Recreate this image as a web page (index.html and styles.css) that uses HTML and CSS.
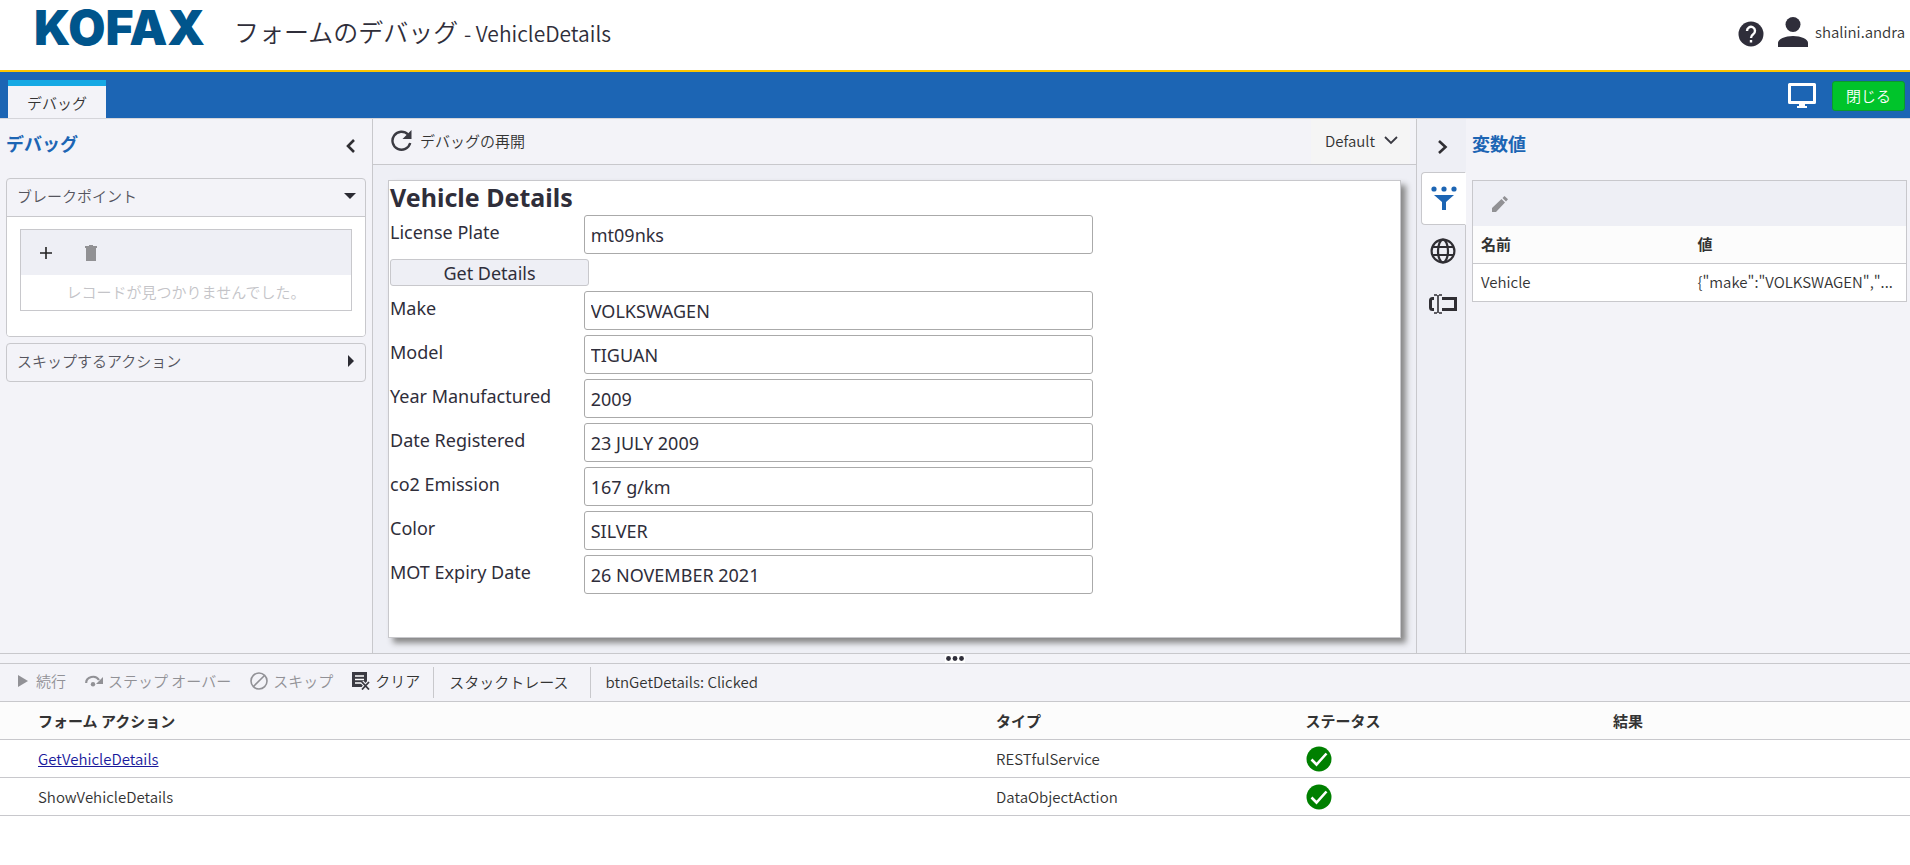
FILE: index.html
```html
<!DOCTYPE html>
<html lang="ja">
<head>
  <meta charset="UTF-8">
  <meta name="viewport" content="width=device-width, initial-scale=1.0">
  <title>フォームのデバッグ - VehicleDetails</title>
  <link rel="stylesheet" href="styles.css">
</head>
<body>
  <header class="header">
    <span class="logo">KOFAX</span>
    <h1 class="title">フォームのデバッグ <small>- VehicleDetails</small></h1>
    <div class="user">
      <button class="icon-btn" aria-label="ヘルプ">
        <svg width="26" height="26" viewBox="0 0 26 26"><circle cx="13" cy="13" r="12.5" fill="#2f2e3a"/><path d="M9 10a4 4 0 1 1 6.2 3.2Q13 14.7 13 17M13 19v2.4" fill="none" stroke="#fff" stroke-width="2.4"/></svg>
      </button>
      <svg width="30" height="30" viewBox="0 0 30 30" fill="#2f2e3a"><circle cx="15" cy="7.5" r="7.5"/><path d="M0 30v-4c0-4 7-7 15-7s15 3 15 7v4z"/></svg>
      <span>shalini.andra</span>
    </div>
  </header>

  <nav class="tabbar">
    <a class="tab" href="#">デバッグ</a>
    <div class="tabbar-right">
      <button class="icon-btn" aria-label="画面">
        <svg width="28" height="26" viewBox="0 0 28 26"><path d="M1.5 1.5h25v18h-25z" fill="none" stroke="#fff" stroke-width="3" stroke-linejoin="round"/><path d="M11 20h6v3h2v2H9v-2h2z" fill="#fff"/></svg>
      </button>
      <button class="close-btn">閉じる</button>
    </div>
  </nav>

  <main class="main">
    <!-- 左パネル -->
    <aside class="left">
      <div class="panel-head">
        <h2>デバッグ</h2>
        <button class="icon-btn" aria-label="折りたたむ">
          <svg width="9" height="14" viewBox="0 0 9 14"><path d="M8 1L2 7l6 6" fill="none" stroke="#2f2e33" stroke-width="2.6"/></svg>
        </button>
      </div>
      <section class="accordion">
        <button class="accordion-head">ブレークポイント
          <svg width="12" height="6" viewBox="0 0 12 6"><path d="M0 0h12L6 6z" fill="#2b2b33"/></svg>
        </button>
        <div class="accordion-body">
          <div class="grid-box">
            <div class="grid-tools">
              <button class="icon-btn" aria-label="追加">
                <svg width="12" height="12" viewBox="0 0 12 12"><path d="M6 0v12M0 6h12" stroke="#222" stroke-width="1.6"/></svg>
              </button>
              <button class="icon-btn" aria-label="削除">
                <svg width="12" height="16" viewBox="0 0 12 16"><path d="M0 1h4V0h4v1h4v2H0zM1 3h10v13H1z" fill="#919194"/></svg>
              </button>
            </div>
            <p class="empty">レコードが見つかりませんでした。</p>
          </div>
        </div>
      </section>
      <section class="accordion">
        <button class="accordion-head">スキップするアクション
          <svg width="12" height="12" viewBox="0 0 12 12"><path d="M4 0v12l6-6z" fill="#2b2b33"/></svg>
        </button>
      </section>
    </aside>

    <!-- フォーム表示エリア -->
    <section class="center">
      <div class="center-tools">
        <button class="text-btn">
          <svg width="21" height="21" viewBox="0 0 21 21"><path d="M17 4.5A9 9 0 1 0 19.2 13" fill="none" stroke="#3a3a42" stroke-width="2.4"/><path d="M20.5 0v9h-9z" fill="#3a3a42"/></svg>
          デバッグの再開
        </button>
        <div class="theme">
          <select aria-label="テーマ"><option>Default</option></select>
          <svg width="14" height="9" viewBox="0 0 14 9"><path d="M1 1l6 6 6-6" fill="none" stroke="#3a3a42" stroke-width="1.8"/></svg>
        </div>
      </div>
      <div class="stage">
        <form class="form">
          <h2>Vehicle Details</h2>
          <div class="field"><label for="plate">License Plate</label><input id="plate" type="text" value="mt09nks"></div>
          <button class="get-btn" type="button">Get Details</button>
          <div class="field"><label for="make">Make</label><input id="make" type="text" value="VOLKSWAGEN"></div>
          <div class="field"><label for="model">Model</label><input id="model" type="text" value="TIGUAN"></div>
          <div class="field"><label for="year">Year Manufactured</label><input id="year" type="text" value="2009"></div>
          <div class="field"><label for="registered">Date Registered</label><input id="registered" type="text" value="23 JULY 2009"></div>
          <div class="field"><label for="co2">co2 Emission</label><input id="co2" type="text" value="167 g/km"></div>
          <div class="field"><label for="color">Color</label><input id="color" type="text" value="SILVER"></div>
          <div class="field"><label for="mot">MOT Expiry Date</label><input id="mot" type="text" value="26 NOVEMBER 2021"></div>
        </form>
      </div>
    </section>

    <!-- 右パネル -->
    <nav class="strip">
      <button class="strip-btn strip-toggle" aria-label="展開">
        <svg width="10" height="14" viewBox="0 0 10 14"><path d="M1 1l6.5 6L1 13" fill="none" stroke="#2f2e33" stroke-width="2.6"/></svg>
      </button>
      <button class="strip-btn active" aria-label="変数値">
        <svg width="26" height="24" viewBox="0 0 26 24" fill="#1c65b4"><circle cx="3" cy="3" r="2.6"/><circle cx="13" cy="3" r="2.6"/><circle cx="23" cy="3" r="2.6"/><path d="M3 9h20l-8 7v8h-4v-8z"/></svg>
      </button>
      <button class="strip-btn" aria-label="グローバル">
        <svg width="26" height="26" viewBox="0 0 26 26" fill="none" stroke="#2f2e33" stroke-width="2.2"><circle cx="13" cy="13" r="11.4"/><ellipse cx="13" cy="13" rx="5" ry="11.4"/><path d="M2 9h22M2 17h22"/></svg>
      </button>
      <button class="strip-btn" aria-label="フィールド">
        <svg width="28" height="20" viewBox="0 0 28 20" fill="none" stroke="#2f2e33"><path d="M5 4.500H3.500Q1.500 4.500 1.500 6.500v7q0 2 2 2H5M13 4.500h13.500v11H13" stroke-width="3"/><path d="M9 1v18M5 1h3M10 1h3M5 19h3M10 19h3" stroke-width="1.6"/></svg>
      </button>
      <div class="strip-rest"></div>
    </nav>
    <aside class="right">
      <div class="panel-head"><h2>変数値</h2></div>
      <div class="var-box">
        <div class="grid-tools">
          <button class="icon-btn" aria-label="編集">
            <svg width="16" height="16" viewBox="0 0 16 16" fill="#919194"><path d="M0 16v-4l9.500-9 3.500 3.500L4 16zM10.500 2L12.500 0 16 3.300 14 5.500z"/></svg>
          </button>
        </div>
        <table class="var-table">
          <thead><tr><th>名前</th><th>値</th></tr></thead>
          <tbody><tr><td>Vehicle</td><td>{"make":"VOLKSWAGEN","...</td></tr></tbody>
        </table>
      </div>
    </aside>
  </main>

  <div class="splitter">
    <button class="splitter-grip" aria-label="サイズ変更">
      <svg width="18" height="5" viewBox="0 0 18 5" fill="#2f2e3a"><circle cx="2.5" cy="2.5" r="2.4"/><circle cx="9" cy="2.5" r="2.4"/><circle cx="15.5" cy="2.5" r="2.4"/></svg>
    </button>
  </div>

  <!-- 実行ログ -->
  <section class="bottom">
    <div class="actions">
      <div class="action-group">
        <button class="text-btn resume" disabled>
          <svg width="10" height="12" viewBox="0 0 10 12"><path d="M0 0l10 6-10 6z" fill="#919196"/></svg>続行
        </button>
        <button class="text-btn" disabled>
          <svg width="18" height="12" viewBox="0 0 18 12"><path d="M1.200 8A6.800 6 0 0 1 14 5" fill="none" stroke="#919196" stroke-width="2.200"/><path d="M18 2v7h-7z" fill="#919196"/><circle cx="8" cy="9.300" r="2.200" fill="#919196"/></svg>ステップ オーバー
        </button>
        <button class="text-btn" disabled>
          <svg width="18" height="18" viewBox="0 0 18 18" fill="none" stroke="#919196" stroke-width="1.600"><circle cx="9" cy="9" r="8"/><path d="M14.500 3.500l-11 11"/></svg>スキップ
        </button>
        <button class="text-btn">
          <svg width="18" height="18" viewBox="0 0 18 18"><path d="M0 0h15v10l-5 5H0z" fill="#3a3a42"/><path d="M3 4h9M3 7.500h9M3 11h6" stroke="#fff" stroke-width="1.500"/><path d="M10 10l7 7.500M17 10l-7 7.500" stroke="#f3f3f8" stroke-width="4"/><path d="M10 10l7 7.500M17 10l-7 7.500" stroke="#3a3a42" stroke-width="1.800"/></svg>クリア
        </button>
      </div>
      <button class="text-btn divided">スタックトレース</button>
      <span class="divided">btnGetDetails: Clicked</span>
    </div>
    <table class="log">
      <thead>
        <tr><th class="col-action">フォーム アクション</th><th class="col-type">タイプ</th><th class="col-status">ステータス</th><th>結果</th></tr>
      </thead>
      <tbody>
        <tr>
          <td><a href="#">GetVehicleDetails</a></td><td>RESTfulService</td>
          <td><svg width="26" height="26" viewBox="0 0 26 26"><circle cx="13" cy="13" r="12.5" fill="#008000"/><path d="M5.500 13.500l5 5 10-11" fill="none" stroke="#fff" stroke-width="2.600"/></svg></td><td></td>
        </tr>
        <tr>
          <td>ShowVehicleDetails</td><td>DataObjectAction</td>
          <td><svg width="26" height="26" viewBox="0 0 26 26"><circle cx="13" cy="13" r="12.5" fill="#008000"/><path d="M5.500 13.500l5 5 10-11" fill="none" stroke="#fff" stroke-width="2.600"/></svg></td><td></td>
        </tr>
      </tbody>
    </table>
  </section>
</body>
</html>
```
FILE: styles.css
```css
* {
  box-sizing: border-box;
}

body {
  margin: 0;
  min-height: 100vh;
  display: flex;
  flex-direction: column;
  background: #fff;
  color: #333;
  font-family: "Noto Sans CJK JP", sans-serif;
  font-size: 15px;
  font-weight: 350;
  line-height: 22px;
}

h1, h2, p {
  margin: 0;
}

svg {
  display: block;
  flex: none;
}

button {
  font: inherit;
  color: inherit;
  cursor: pointer;
}

.icon-btn {
  display: flex;
  padding: 0;
  border: none;
  background: none;
}

.text-btn {
  display: flex;
  align-items: center;
  gap: 8px;
  padding: 0 0 2px;
  border: none;
  background: none;
}

.text-btn:disabled {
  color: #919196;
  cursor: default;
}

/* ヘッダー */
.header {
  display: flex;
  height: 72px;
  padding: 0 5px 6px 34px;
  align-items: center;
  border-bottom: 2px solid #fdc500;
}

.logo {
  padding-bottom: 8px;
  font: 900 48px/48px Inter, sans-serif;
  color: #00558c;
}

.title {
  margin-left: 29px;
  font-size: 25px;
  font-weight: 350;
  color: #2f2e3a;
}

.title small {
  font-size: 21px;
}

.user {
  display: flex;
  align-items: center;
  gap: 7px;
  margin-left: auto;
}

.user .icon-btn {
  padding: 4px 7px 0 0;
}

/* タブバー */
.tabbar {
  display: flex;
  justify-content: space-between;
  padding: 8px 5px 0 8px;
  background: #1c65b4;
  border-bottom: 1px solid #d5d5da;
}

.tab {
  height: 38px;
  padding: 6px 19px 0;
  border-top: 6px solid #16a9e4;
  background: #f3f3f8;
  color: #333;
  text-decoration: none;
}

.tabbar-right {
  display: flex;
  align-items: center;
  gap: 16px;
  padding-bottom: 6px;
}

.close-btn {
  height: 30px;
  padding: 0 13px;
  border: 1px solid #0c9a2b;
  border-radius: 3px;
  background: #00c42b;
  color: #fff;
}

/* メイン */
.main {
  flex: 1;
  display: flex;
  background: #f3f3f8;
}

.panel-head {
  display: flex;
  align-items: center;
  justify-content: space-between;
  height: 50px;
}

.panel-head h2 {
  padding-bottom: 2px;
  font-size: 18px;
  color: #1c65b4;
}

.panel-head .icon-btn {
  padding-top: 4px;
}

.left {
  width: 373px;
  padding: 0 6px;
  border-right: 1px solid #c8c8cc;
}

.left .panel-head {
  margin-bottom: 9px;
  padding-right: 11px;
}

.accordion {
  margin-bottom: 6px;
  border: 1px solid #c8c8cc;
  border-radius: 4px;
  overflow: hidden;
}

.accordion-head {
  display: flex;
  justify-content: space-between;
  align-items: center;
  width: 100%;
  height: 37px;
  padding: 0 9px 3px 10px;
  border: none;
  background: none;
  color: #55555e;
}

.accordion-body {
  padding: 12px 13px 25px;
  border-top: 1px solid #c8c8cc;
  background: #fff;
}

.grid-box,
.var-box {
  border: 1px solid #c8c8cc;
  background: #fff;
}

.grid-tools {
  display: flex;
  align-items: center;
  gap: 33px;
  height: 45px;
  padding: 0 19px;
  background: #eeeff5;
}

.empty {
  padding: 6px 0 7px;
  text-align: center;
  color: #c4c4c8;
}

.center {
  flex: 1;
  display: flex;
  flex-direction: column;
  background: #eeeff5;
}

.center-tools {
  display: flex;
  justify-content: space-between;
  height: 46px;
  padding: 0 6px 0 18px;
  background: #f3f3f8;
  border-bottom: 1px solid #c8c8cc;
}

.theme {
  display: flex;
  align-items: center;
  gap: 8px;
  padding: 0 12px 2px 14px;
  background: #f5f5f5;
}

.theme select {
  padding: 0;
  border: none;
  appearance: none;
  background: none;
  font: inherit;
  color: inherit;
}

.stage {
  flex: 1;
  display: flex;
  padding: 15px;
}

.form {
  flex: 1;
  padding: 1px;
  border: 1px solid #c8c8cc;
  background: #fff;
  box-shadow: 5px 5px 6px #888;
  font-family: "Noto Sans", sans-serif;
  font-size: 18px;
  font-weight: 400;
  color: #2f2e3a;
}

.form h2 {
  padding-bottom: 3px;
  font-size: 25px;
  line-height: 30px;
}

.field {
  display: flex;
  margin-bottom: 5px;
}

.field label {
  width: 19.2%;
  padding-top: 6px;
}

.field input {
  width: 50.5%;
  height: 39px;
  padding: 1px 6px 0;
  border: 1px solid #aaa;
  border-radius: 3px;
  font: inherit;
  color: inherit;
}

.get-btn {
  display: block;
  width: 199px;
  height: 27px;
  margin-bottom: 5px;
  padding: 0;
  border: 1px solid #c8c8cc;
  border-radius: 3px;
  background: #eeeff5;
}

/* 縦タブ */
.strip {
  display: flex;
  flex-direction: column;
  width: 50px;
  padding-left: 4px;
  border-left: 1px solid #c8c8cc;
  background: #eeeff5;
}

.strip-btn {
  display: flex;
  align-items: center;
  justify-content: center;
  width: 100%;
  height: 53px;
  padding: 0 0 2px;
  border: none;
  border-right: 1px solid #c8c8cc;
  background: none;
}

.strip-toggle {
  border-right-color: transparent;
  padding: 2px 0 0;
}

.strip-btn.active {
  border: 1px solid #c8c8cc;
  border-right-color: #fff;
  border-radius: 4px 0 0 4px;
  background: #fff;
}

.strip-rest {
  flex: 1;
  border-right: 1px solid #c8c8cc;
}

.right {
  width: 444px;
  padding: 0 3px 0 6px;
}

.right .panel-head {
  margin-bottom: 11px;
}

.var-table,
.log {
  width: 100%;
  border-collapse: collapse;
  table-layout: fixed;
}

.var-table th,
.log th {
  height: 37px;
  padding: 0 8px;
  background: #fcfcfc;
  border-bottom: 1px solid #c8c8cc;
  text-align: left;
}

.var-table td {
  height: 38px;
  padding: 0 0 0 8px;
  white-space: nowrap;
}

/* 分割バー */
.splitter {
  display: flex;
  justify-content: center;
  height: 11px;
  border: 1px solid #c8c8cc;
  border-width: 1px 0;
  background: #f3f3f8;
}

.splitter-grip {
  display: flex;
  align-items: center;
  height: 9px;
  padding: 0 1px;
  border: none;
  background: #fff;
}

/* 下部エリア */
.bottom {
  padding-bottom: 49px;
}

.actions {
  display: flex;
  align-items: center;
  height: 38px;
  padding-left: 18px;
  background: #f3f3f8;
  border-bottom: 1px solid #c8c8cc;
}

.action-group {
  display: flex;
  gap: 19px;
  margin-right: 13px;
}

.actions .text-btn {
  gap: 5px;
}

.actions .resume {
  gap: 8px;
}

.actions .divided {
  height: 31px;
  padding: 0 21px 2px 15px;
  border-left: 1px solid #c8c8cc;
  line-height: 29px;
}

.log th,
.log td {
  height: 38px;
  padding: 0 0 0 1px;
  border-bottom: 1px solid #c8c8cc;
}

.log th {
  padding-top: 2px;
}

.log th:first-child,
.log td:first-child {
  padding-left: 38px;
}

.log a {
  color: #1a1a9c;
}

.col-action {
  width: 52.1%;
}

.col-type {
  width: 16.2%;
}

.col-status {
  width: 16.1%;
}
```
